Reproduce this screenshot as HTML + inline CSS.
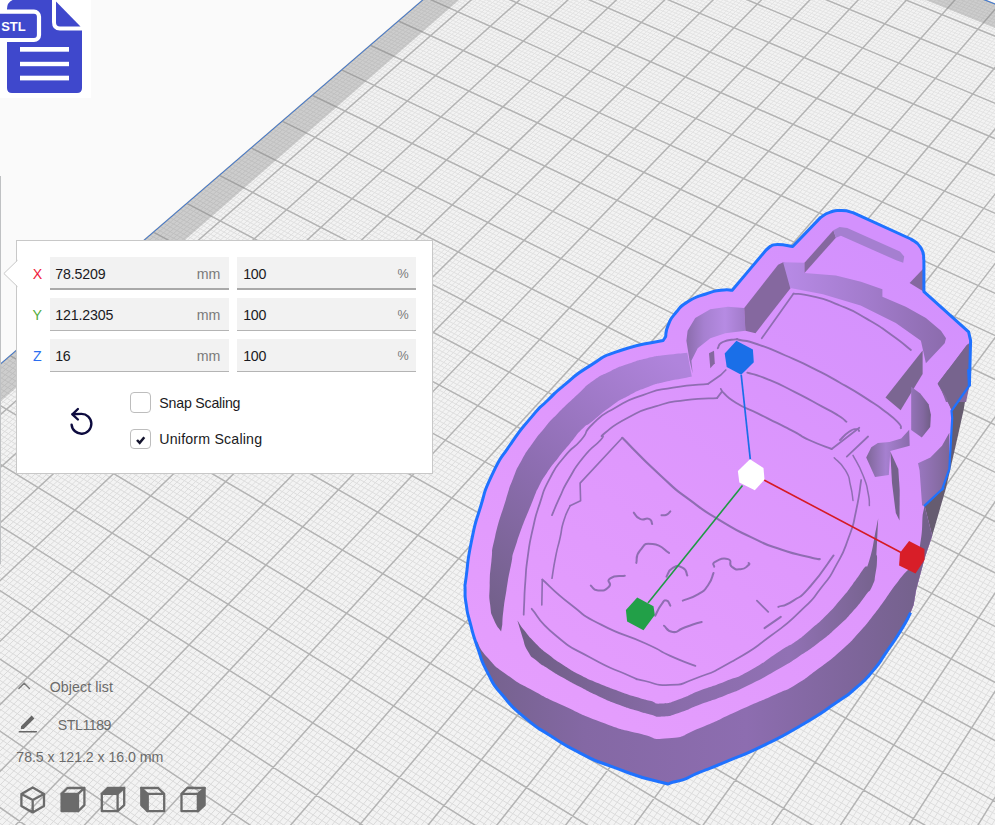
<!DOCTYPE html>
<html><head><meta charset="utf-8"><title>Scale tool</title>
<style>
html,body{margin:0;padding:0;}
body{width:995px;height:825px;overflow:hidden;background:#fafafa;position:relative;font-family:"Liberation Sans",sans-serif;color:#1a1a22;font-size:14.2px;}
.scene{position:absolute;left:0;top:0;display:block;}
.abs{position:absolute;white-space:nowrap;line-height:16px;}
.stlbox{position:absolute;left:0;top:0;width:91px;height:97.5px;background:#fff;}
.leftbar{position:absolute;left:0;top:176px;width:1.2px;height:388px;background:#bfc1c3;}
.panel{position:absolute;left:16px;top:240px;width:415px;height:232px;background:#fff;border:1px solid #c8c8c8;}
.field{position:absolute;height:31px;background:#f2f2f2;border-bottom:1px solid #b4b4b4;}
.field.hot{border-bottom:2px solid #a9a9a9;height:31px;}
.unit{color:#7a7a7a;}
.gray{color:#6b6b6b;}
.cb{position:absolute;left:130.3px;width:18.7px;height:18.8px;border:1px solid #bdbdbd;border-radius:4px;background:#fff;}
</style></head><body>
<svg class="scene" width="995" height="825" viewBox="0 0 995 825">
<path d="M1005 835 L-10 835 L-10 373 L434.3 -10 L959.7 -10 L1005 8Z" fill="#f3f3f3"/>
<defs><linearGradient id="gminor" gradientUnits="userSpaceOnUse" x1="700" y1="0" x2="300" y2="825"><stop offset="0" stop-color="#e3e3e3"/><stop offset="1" stop-color="#dadada"/></linearGradient></defs>
<path d="M-5 373.7L433.4 -5M-5 378.6L438.2 -5M-5 383.7L443 -5M-5 388.7L447.8 -5M-5 393.7L452.7 -5M-5 398.8L457.5 -5M-5 403.9L462.3 -5M-5 409L467.1 -5M-5 414.2L472 -5M-5 424.5L481.6 -5M-5 429.7L486.4 -5M-5 435L491.3 -5M-5 440.2L496.1 -5M-5 445.5L500.9 -5M-5 450.8L505.8 -5M-5 456.1L510.6 -5M-5 461.5L515.4 -5M-5 466.8L520.2 -5M-5 477.6L529.9 -5M-5 483.1L534.7 -5M-5 488.6L539.5 -5M-5 494L544.4 -5M-5 499.6L549.2 -5M-5 505.1L554 -5M-5 510.7L558.8 -5M-5 516.3L563.7 -5M-5 521.9L568.5 -5M-5 533.2L578.1 -5M-5 538.9L583 -5M-5 544.6L587.8 -5M-5 550.3L592.6 -5M-5 556.1L597.4 -5M-5 561.9L602.3 -5M-5 567.7L607.1 -5M-5 573.6L611.9 -5M-5 579.5L616.7 -5M-5 591.3L626.4 -5M-5 597.3L631.2 -5M-5 603.3L636.1 -5M-5 609.3L640.9 -5M-5 615.3L645.7 -5M-5 621.4L650.5 -5M-5 627.5L655.4 -5M-5 633.7L660.2 -5M-5 639.8L665 -5M-5 652.2L674.7 -5M-5 658.5L679.5 -5M-5 664.8L684.3 -5M-5 671.1L689.1 -5M-5 677.4L694 -5M-5 683.8L698.8 -5M-5 690.2L703.6 -5M-5 696.6L708.4 -5M-5 703.1L713.3 -5M-5 716.1L722.9 -5M-5 722.7L727.7 -5M-5 729.3L732.6 -5M-5 735.9L737.4 -5M-5 742.6L742.2 -5M-5 749.3L747 -5M-5 756L751.9 -5M-5 762.7L756.7 -5M-5 769.5L761.5 -5M-5 783.2L771.2 -5M-5 790.1L776 -5M-5 797.1L780.8 -5M-5 804L785.6 -5M-5 811L790.5 -5M-5 818.1L795.3 -5M-5 825.1L800.1 -5M-2.8 830L804.9 -5M4 830L809.8 -5M17.8 830L819.4 -5M24.7 830L824.2 -5M31.6 830L829.1 -5M38.5 830L833.9 -5M45.4 830L838.7 -5M52.3 830L843.5 -5M59.1 830L848.4 -5M66 830L853.2 -5M72.9 830L858 -5M86.7 830L867.7 -5M93.6 830L872.5 -5M100.5 830L877.3 -5M107.4 830L882.1 -5M114.2 830L887 -5M121.1 830L891.8 -5M128 830L896.6 -5M134.9 830L901.4 -5M141.8 830L906.2 -5M155.6 830L915.9 -5M162.5 830L920.7 -5M169.3 830L925.5 -5M176.2 830L930.4 -5M183.1 830L935.2 -5M190 830L940 -5M196.9 830L944.8 -5M203.8 830L949.7 -5M210.7 830L954.5 -5M224.4 830L964.1 -5M231.3 830L969 -5M238.2 830L973.4 -4.6M245.1 830L977 -3.1M252 830L980.6 -1.7M258.9 830L984.1 -0.3M265.8 830L987.7 1.1M272.6 830L991.3 2.6M279.5 830L994.9 4M293.3 830L1000 9.4M300.2 830L1000 15M307.1 830L1000 20.7M314 830L1000 26.4M320.9 830L1000 32.2M327.7 830L1000 38M334.6 830L1000 43.8M341.5 830L1000 49.7M348.4 830L1000 55.6M362.2 830L1000 67.5M369.1 830L1000 73.5M375.9 830L1000 79.5M382.8 830L1000 85.6M389.7 830L1000 91.7M396.6 830L1000 97.8M403.5 830L1000 104M410.4 830L1000 110.2M417.3 830L1000 116.5M431 830L1000 129.1M437.9 830L1000 135.5M444.8 830L1000 141.9M451.7 830L1000 148.3M458.6 830L1000 154.8M465.5 830L1000 161.3M472.3 830L1000 167.9M479.2 830L1000 174.5M486.1 830L1000 181.2M499.9 830L1000 194.6M506.8 830L1000 201.4M513.7 830L1000 208.2M520.5 830L1000 215M527.4 830L1000 221.9M534.3 830L1000 228.9M541.2 830L1000 235.9M548.1 830L1000 242.9M555 830L1000 250M568.7 830L1000 264.3M575.6 830L1000 271.5M582.5 830L1000 278.8M589.4 830L1000 286.1M596.3 830L1000 293.5M603.2 830L1000 300.9M610 830L1000 308.4M616.9 830L1000 315.9M623.8 830L1000 323.4M637.6 830L1000 338.7M644.5 830L1000 346.4M651.4 830L1000 354.2M658.2 830L1000 362M665.1 830L1000 369.9M672 830L1000 377.8M678.9 830L1000 385.8M685.8 830L1000 393.8M692.7 830L1000 401.9M706.4 830L1000 418.2M713.3 830L1000 426.5M720.2 830L1000 434.8M727.1 830L1000 443.2M734 830L1000 451.6M740.9 830L1000 460.1M747.7 830L1000 468.7M754.6 830L1000 477.3M761.5 830L1000 486M775.3 830L1000 503.5M782.2 830L1000 512.4M789 830L1000 521.3M795.9 830L1000 530.3M802.8 830L1000 539.3M809.7 830L1000 548.5M816.6 830L1000 557.6M823.5 830L1000 566.9M830.4 830L1000 576.2M844.1 830L1000 595.1M851 830L1000 604.6M857.9 830L1000 614.2M864.8 830L1000 623.9M871.7 830L1000 633.7M878.5 830L1000 643.5M885.4 830L1000 653.4M892.3 830L1000 663.4M899.2 830L1000 673.4M913 830L1000 693.8M919.8 830L1000 704M926.7 830L1000 714.4M933.6 830L1000 724.9M940.5 830L1000 735.4M947.4 830L1000 746M954.3 830L1000 756.7M961.1 830L1000 767.5M968 830L1000 778.4M981.8 830L1000 800.3M988.7 830L1000 811.5M995.6 830L1000 822.7M-5 827.6L-1.7 830M-5 819.7L9.6 830M-5 811.8L20.9 830M-5 796.2L43.4 830M-5 788.4L54.7 830M-5 780.7L65.9 830M-5 773L77.2 830M-5 765.4L88.5 830M-5 757.8L99.7 830M-5 750.2L111 830M-5 742.7L122.3 830M-5 735.3L133.6 830M-5 720.5L156.1 830M-5 713.1L167.4 830M-5 705.8L178.6 830M-5 698.6L189.9 830M-5 691.3L201.2 830M-5 684.2L212.4 830M-5 677L223.7 830M-5 669.9L235 830M-5 662.8L246.2 830M-5 648.8L268.8 830M-5 641.9L280 830M-5 634.9L291.3 830M-5 628.1L302.6 830M-5 621.2L313.8 830M-5 614.4L325.1 830M-5 607.6L336.4 830M-5 600.9L347.6 830M-5 594.2L358.9 830M-5 580.9L381.4 830M-5 574.3L392.7 830M-5 567.7L404 830M-5 561.2L415.2 830M-5 554.7L426.5 830M-5 548.2L437.8 830M-5 541.8L449 830M-5 535.4L460.3 830M-5 529.1L471.6 830M-5 516.4L494.1 830M-5 510.2L505.3 830M-5 503.9L516.6 830M-5 497.7L527.9 830M-5 491.5L539.1 830M-5 485.4L550.4 830M-5 479.3L561.7 830M-5 473.2L572.9 830M-5 467.2L584.2 830M-5 455.1L606.7 830M-5 449.2L618 830M-5 443.3L629.3 830M-5 437.3L640.5 830M-5 431.5L651.8 830M-5 425.6L663 830M-5 419.8L674.3 830M-5 414L685.6 830M-5 408.3L696.8 830M-5 396.8L719.4 830M-5 391.1L730.6 830M-5 385.5L741.9 830M-5 379.9L753.2 830M-5 374.3L764.4 830M-5 368.7L775.7 830M-1.2 365.4L786.9 830M2.6 362.1L798.2 830M6.4 358.8L809.5 830M14 352.3L832 830M17.7 349.1L843.3 830M21.5 345.8L854.5 830M25.2 342.6L865.8 830M29 339.4L877 830M32.7 336.2L888.3 830M36.4 333L899.6 830M40.1 329.8L910.8 830M43.8 326.6L922.1 830M51.2 320.3L944.6 830M54.8 317.1L955.9 830M58.5 314L967.1 830M62.1 310.8L978.4 830M65.7 307.7L989.7 830M69.4 304.6L1000 829.5M73 301.5L1000 823.1M76.6 298.4L1000 816.8M80.2 295.3L1000 810.6M87.3 289.1L1000 798.1M90.9 286L1000 791.9M94.4 283L1000 785.7M98 279.9L1000 779.6M101.5 276.9L1000 773.5M105 273.8L1000 767.4M108.6 270.8L1000 761.3M112.1 267.8L1000 755.3M115.6 264.8L1000 749.3M122.5 258.8L1000 737.4M126 255.8L1000 731.4M129.4 252.8L1000 725.5M132.9 249.8L1000 719.7M136.3 246.9L1000 713.8M139.8 243.9L1000 708M143.2 241L1000 702.2M146.6 238L1000 696.4M150 235.1L1000 690.7M156.8 229.2L1000 679.3M160.1 226.3L1000 673.6M163.5 223.4L1000 667.9M166.9 220.5L1000 662.3M170.2 217.7L1000 656.7M173.6 214.8L1000 651.1M176.9 211.9L1000 645.6M180.2 209L1000 640.1M183.5 206.2L1000 634.6M190.1 200.5L1000 623.6M193.4 197.7L1000 618.2M196.7 194.8L1000 612.8M200 192L1000 607.4M203.2 189.2L1000 602M206.5 186.4L1000 596.7M209.7 183.6L1000 591.3M213 180.8L1000 586M216.2 178L1000 580.8M222.6 172.5L1000 570.3M225.8 169.7L1000 565.1M229 167L1000 559.9M232.2 164.2L1000 554.7M235.4 161.5L1000 549.5M238.5 158.8L1000 544.4M241.7 156L1000 539.3M244.9 153.3L1000 534.2M248 150.6L1000 529.2M254.3 145.2L1000 519.1M257.4 142.5L1000 514.1M260.5 139.8L1000 509.1M263.6 137.2L1000 504.1M266.7 134.5L1000 499.2M269.8 131.8L1000 494.3M272.9 129.2L1000 489.3M275.9 126.5L1000 484.5M279 123.9L1000 479.6M285.1 118.6L1000 469.9M288.2 116L1000 465.1M291.2 113.4L1000 460.3M294.2 110.8L1000 455.6M297.2 108.2L1000 450.8M300.3 105.6L1000 446.1M303.3 103L1000 441.3M306.3 100.4L1000 436.7M309.3 97.8L1000 432M315.2 92.7L1000 422.7M318.2 90.1L1000 418M321.1 87.6L1000 413.4M324.1 85L1000 408.9M327 82.5L1000 404.3M330 80L1000 399.7M332.9 77.4L1000 395.2M335.8 74.9L1000 390.7M338.7 72.4L1000 386.2M344.5 67.4L1000 377.2M347.4 64.9L1000 372.8M350.3 62.4L1000 368.3M353.2 59.9L1000 363.9M356.1 57.4L1000 359.5M359 55L1000 355.1M361.8 52.5L1000 350.8M364.7 50.1L1000 346.4M367.5 47.6L1000 342.1M373.2 42.7L1000 333.5M376 40.3L1000 329.2M378.8 37.8L1000 324.9M381.6 35.4L1000 320.7M384.4 33L1000 316.4M387.2 30.6L1000 312.2M390 28.2L1000 308M392.8 25.8L1000 303.8M395.6 23.4L1000 299.7M401.1 18.6L1000 291.3M403.9 16.3L1000 287.2M406.6 13.9L1000 283.1M409.4 11.5L1000 279M412.1 9.2L1000 274.9M414.8 6.8L1000 270.9M417.6 4.5L1000 266.8M420.3 2.1L1000 262.8M423 -0.2L1000 258.7M428.4 -4.9L1000 250.7M436 -5L1000 246.8M443.9 -5L1000 242.8M451.8 -5L1000 238.8M459.7 -5L1000 234.9M467.6 -5L1000 231M475.4 -5L1000 227.1M483.3 -5L1000 223.2M491.2 -5L1000 219.3M507 -5L1000 211.6M514.9 -5L1000 207.7M522.8 -5L1000 203.9M530.7 -5L1000 200.1M538.6 -5L1000 196.3M546.4 -5L1000 192.5M554.3 -5L1000 188.7M562.2 -5L1000 185M570.1 -5L1000 181.2M585.9 -5L1000 173.7M593.8 -5L1000 170M601.7 -5L1000 166.3M609.5 -5L1000 162.7M617.4 -5L1000 159M625.3 -5L1000 155.3M633.2 -5L1000 151.7M641.1 -5L1000 148.1M649 -5L1000 144.4M664.8 -5L1000 137.2M672.6 -5L1000 133.6M680.5 -5L1000 130.1M688.4 -5L1000 126.5M696.3 -5L1000 123M704.2 -5L1000 119.4M712.1 -5L1000 115.9M720 -5L1000 112.4M727.8 -5L1000 108.9M743.6 -5L1000 101.9M751.5 -5L1000 98.5M759.4 -5L1000 95M767.3 -5L1000 91.6M775.2 -5L1000 88.2M783.1 -5L1000 84.7M790.9 -5L1000 81.3M798.8 -5L1000 77.9M806.7 -5L1000 74.6M822.5 -5L1000 67.8M830.4 -5L1000 64.5M838.3 -5L1000 61.1M846.1 -5L1000 57.8M854 -5L1000 54.5M861.9 -5L1000 51.2M869.8 -5L1000 47.9M877.7 -5L1000 44.6M885.6 -5L1000 41.3M901.3 -5L1000 34.8M909.2 -5L1000 31.6M917.1 -5L1000 28.3M925 -5L1000 25.1M932.9 -5L1000 21.9M940.8 -5L1000 18.7M948.6 -5L1000 15.5M956.5 -5L1000 12.3M964.4 -5L1000 9.2" stroke="url(#gminor)" stroke-width="1" fill="none"/>
<path d="M-5 368.7L428.5 -5M-5 419.3L476.8 -5M-5 472.2L525.1 -5M-5 527.5L573.3 -5M-5 585.4L621.6 -5M-5 646L669.8 -5M-5 709.6L718.1 -5M-5 776.4L766.3 -5M10.9 830L814.6 -5M79.8 830L862.8 -5M148.7 830L911.1 -5M217.6 830L959.3 -5M286.4 830L998.5 5.4M355.3 830L1000 61.5M424.1 830L1000 122.8M493 830L1000 187.8M561.9 830L1000 257.1M630.7 830L1000 331M699.6 830L1000 410M768.4 830L1000 494.7M837.2 830L1000 585.6M906.1 830L1000 683.5M974.9 830L1000 789.3M-5 804L32.1 830M-5 727.8L144.8 830M-5 655.8L257.5 830M-5 587.5L370.2 830M-5 522.7L482.8 830M-5 461.1L595.5 830M-5 402.5L708.1 830M10.2 355.6L820.7 830M47.5 323.4L933.4 830M83.8 292.2L1000 804.3M119 261.8L1000 743.3M153.4 232.2L1000 685M186.8 203.3L1000 629.1M219.4 175.3L1000 575.5M251.1 147.9L1000 524.1M282.1 121.2L1000 474.7M312.2 95.2L1000 427.3M341.6 69.9L1000 381.7M370.3 45.2L1000 337.8M398.4 21L1000 295.5M425.7 -2.6L1000 254.7M499.1 -5L1000 215.4M578 -5L1000 177.5M656.9 -5L1000 140.8M735.7 -5L1000 105.4M814.6 -5L1000 71.2M893.5 -5L1000 38.1M972.3 -5L1000 6" stroke="#b3b3b3" stroke-width="1.5" fill="none"/>
<path d="M-10 373 L434.3 -10 L470.4 -10 L-10 410.8Z" fill="#808080" fill-opacity="0.33"/>
<path d="M959.7 -10 L1005 8 L1005 32 L900.7 -10Z" fill="#808080" fill-opacity="0.33"/>
<path d="M-5 368.7L428.5 -5M972.3 -5L1000 6" stroke="#3a78d8" stroke-width="1" fill="none"/>
<defs>
<linearGradient id="gwall" gradientUnits="userSpaceOnUse" x1="470" y1="0" x2="930" y2="0">
<stop offset="0" stop-color="#73618a"/><stop offset="0.25" stop-color="#8468a4"/><stop offset="0.6" stop-color="#8d6db0"/><stop offset="0.85" stop-color="#7d6599"/><stop offset="1" stop-color="#73618a"/></linearGradient>
<linearGradient id="gcres" gradientUnits="userSpaceOnUse" x1="500" y1="640" x2="700" y2="380">
<stop offset="0" stop-color="#6f5e85"/><stop offset="0.5" stop-color="#8e6eb2"/><stop offset="1" stop-color="#b084dc"/></linearGradient>
<linearGradient id="gneck" gradientUnits="userSpaceOnUse" x1="790" y1="0" x2="950" y2="0">
<stop offset="0" stop-color="#b689e4"/><stop offset="0.5" stop-color="#a27bcb"/><stop offset="1" stop-color="#8a6bab"/></linearGradient>
<linearGradient id="gisl" gradientUnits="userSpaceOnUse" x1="520" y1="0" x2="880" y2="0">
<stop offset="0" stop-color="#6f5e85"/><stop offset="0.45" stop-color="#8a6cab"/><stop offset="0.75" stop-color="#9171b4"/><stop offset="1" stop-color="#75628c"/></linearGradient>
<linearGradient id="glight" gradientUnits="userSpaceOnUse" x1="860" y1="240" x2="540" y2="720">
<stop offset="0" stop-color="#d391fd"/><stop offset="0.55" stop-color="#df98fd"/><stop offset="1" stop-color="#e59efd"/></linearGradient>
<linearGradient id="gshr" gradientUnits="userSpaceOnUse" x1="911" y1="0" x2="931" y2="0">
<stop offset="0" stop-color="#9473b8"/><stop offset="0.6" stop-color="#8368a0"/><stop offset="1" stop-color="#6f5e85"/></linearGradient>
<linearGradient id="gshl" gradientUnits="userSpaceOnUse" x1="866" y1="0" x2="910" y2="0">
<stop offset="0" stop-color="#7d6696"/><stop offset="0.45" stop-color="#a680d0"/><stop offset="1" stop-color="#8a6cab"/></linearGradient>
<linearGradient id="gring" gradientUnits="userSpaceOnUse" x1="918" y1="0" x2="950" y2="0">
<stop offset="0" stop-color="#9a77c0"/><stop offset="1" stop-color="#7d6696"/></linearGradient>
<linearGradient id="gring2" gradientUnits="userSpaceOnUse" x1="686" y1="0" x2="746" y2="0">
<stop offset="0" stop-color="#8a6cab"/><stop offset="0.3" stop-color="#a680d0"/><stop offset="0.65" stop-color="#b68be3"/><stop offset="1" stop-color="#a07ac8"/></linearGradient>
</defs>
<path d="M910.6 612.6C907.4 618.5 909.2 616.8 901 630.2C892.8 643.6 895.1 639.4 885.9 652.8C876.7 666.2 883.4 658.7 873.4 670.4C863.3 682.1 868.3 677.1 855.8 688C843.2 698.9 854.1 690.5 835.7 703.1C817.3 715.6 824.8 711.4 800.5 725.7C776.2 739.9 787.9 733.6 762.8 745.8C737.7 757.9 746.1 753.3 725.1 762.1C704.2 770.9 716.3 765.7 700 772.2C683.7 778.6 690.8 778.5 676.1 781.5C661.5 784.4 677 785.7 656 781C635.1 776.2 638.4 776.3 613.3 767.1C588.2 757.9 601.6 763.8 580.7 753.3C559.7 742.8 568.9 747.5 550.5 735.7C532.1 724 541.3 731.5 525.4 718.1C509.5 704.7 515.3 710.6 502.8 695.5C490.2 680.5 496.1 688.8 487.7 672.9C479.3 657 483.5 664.5 477.6 647.8C471.8 631 473.9 636.9 470.1 622.7C466.3 608.4 468 616 466.3 605.1C464.7 594.2 465.1 599.7 465.1 590C465.1 580.3 464.2 592.2 466.3 575.9C468.4 559.6 466.8 564 471.5 541C476.2 518 473.7 528.9 480.5 507C487.3 485.1 482 496.1 491.8 475.4C501.6 454.7 496.9 464.3 510 445C523.1 425.7 518.3 432.6 531 417.6C543.7 402.6 536.6 411.1 548 400C559.4 388.9 551 395.9 565.1 384.4C579.2 372.9 571.8 376.9 590.2 365.6C608.7 354.3 596.1 358.9 620.4 350.5C644.7 342.1 648.9 343.8 663.1 340.5L665.6 336.7C666.4 332.9 664.8 333.3 668.1 325.4C671.5 317.4 669 320.8 675.7 312.8C682.4 304.9 678.2 307.8 688.2 301.5C698.3 295.2 694.9 297.7 705.8 294C716.7 290.2 712.1 291.5 720.9 290.2C729.7 288.9 728.4 290.2 732.2 290.2L732.2 290.2L746 273.9L766.1 250L770.1 246.5L770.1 246.5C772.6 245.8 770.1 244.5 777.7 244.5C785.2 244.5 787.7 245.8 792.7 246.5L792.7 246.5L820.4 217.6L820.4 217.6C823.7 215.8 823.3 214.4 830.4 212.1C837.5 209.7 834.2 210.4 841.7 210.6C849.3 210.7 849.3 211.9 853 212.6L853 212.6L910.8 239L910.8 239C914.2 241.9 916.5 240.6 920.9 247.8C925.2 254.9 922.9 256.1 923.9 260.3L923.9 260.3L923.9 291.7L968.6 331.9L968.6 331.9L970.6 340.7L970.6 340.7L969.4 386L966.1 395L963.6 410.1L958.6 432.7L946 488L932.2 535.7L924.6 558.3L916.1 590L913.6 605.1L910.6 612.6Z" fill="#665c70"/>
<path d="M910.6 612.6C907.4 618.5 909.2 616.8 901 630.2C892.8 643.6 895.1 639.4 885.9 652.8C876.7 666.2 883.4 658.7 873.4 670.4C863.3 682.1 868.3 677.1 855.8 688C843.2 698.9 854.1 690.5 835.7 703.1C817.3 715.6 824.8 711.4 800.5 725.7C776.2 739.9 787.9 733.6 762.8 745.8C737.7 757.9 746.1 753.3 725.1 762.1C704.2 770.9 716.3 765.7 700 772.2C683.7 778.6 690.8 778.5 676.1 781.5C661.5 784.4 677 785.7 656 781C635.1 776.2 638.4 776.3 613.3 767.1C588.2 757.9 601.6 763.8 580.7 753.3C559.7 742.8 568.9 747.5 550.5 735.7C532.1 724 541.3 731.5 525.4 718.1C509.5 704.7 515.3 710.6 502.8 695.5C490.2 680.5 496.1 688.8 487.7 672.9C479.3 657 483.5 664.5 477.6 647.8C471.8 631 473.9 636.9 470.1 622.7C466.3 608.4 468 616 466.3 605.1C464.7 594.2 465.1 599.7 465.1 590C465.1 580.3 464.2 592.2 466.3 575.9C468.4 559.6 466.8 564 471.5 541C476.2 518 473.7 528.9 480.5 507C487.3 485.1 482 496.1 491.8 475.4C501.6 454.7 496.9 464.3 510 445C523.1 425.7 518.3 432.6 531 417.6C543.7 402.6 536.6 411.1 548 400C559.4 388.9 551 395.9 565.1 384.4C579.2 372.9 571.8 376.9 590.2 365.6C608.7 354.3 596.1 358.9 620.4 350.5C644.7 342.1 648.9 343.8 663.1 340.5L665.6 336.7C666.4 332.9 664.8 333.3 668.1 325.4C671.5 317.4 669 320.8 675.7 312.8C682.4 304.9 678.2 307.8 688.2 301.5C698.3 295.2 694.9 297.7 705.8 294C716.7 290.2 712.1 291.5 720.9 290.2C729.7 288.9 728.4 290.2 732.2 290.2L732.2 290.2L746 273.9L766.1 250L770.1 246.5L770.1 246.5C772.6 245.8 770.1 244.5 777.7 244.5C785.2 244.5 787.7 245.8 792.7 246.5L792.7 246.5L820.4 217.6L820.4 217.6C823.7 215.8 823.3 214.4 830.4 212.1C837.5 209.7 834.2 210.4 841.7 210.6C849.3 210.7 849.3 211.9 853 212.6L853 212.6L910.8 239L910.8 239C914.2 241.9 916.5 240.6 920.9 247.8C925.2 254.9 922.9 256.1 923.9 260.3L923.9 260.3L923.9 291.7L968.6 331.9L968.6 331.9L970.6 340.7L970.6 340.7L969.4 386L968.2 370L969 386L951.5 410.8L952.2 418.1L949.3 469.1L942 489.9L943.5 488L924.6 505.6L932.2 535.7L924.6 558.3L916.1 590L913.6 605.1L910.6 612.6Z" fill="url(#glight)"/>
<path d="M476.4 640.3C480.2 646.1 477.2 646.1 487.7 657.8C498.2 669.6 492.7 664.5 507.8 675.4C522.9 686.3 514.5 680.5 532.9 690.5C551.3 700.6 540.5 695.1 563.1 705.6C585.7 716 575.6 712.7 600.8 721.9C625.9 731.1 615.8 727.8 638.4 733.2C661.1 738.7 648.1 740 668.6 738.2C689.1 736.5 677 737.1 700 728C723 718.9 712.6 722.2 737.7 711C762.8 699.8 756.2 703.2 775.4 694.5C794.6 685.8 781 693.5 795.2 685C809.3 676.5 802.7 680.5 817.9 669.1C833 657.7 827 663 840.6 650.9C854.2 638.8 847.7 644.8 858.8 632.7C869.9 620.6 864.8 626.2 873.9 614.5C883 602.9 878 609 886.1 597.9C894.1 586.8 890.6 590.8 898.2 581.2C905.8 571.6 903.7 574.6 908.8 569.1C913.8 563.5 909.6 572.4 913.3 564.5C917.1 556.7 916.9 562.1 920 545.5C923.1 528.8 921.8 524.8 922.7 514.5L924.6 505.6L932.2 535.7L924.6 558.3L916.1 590L913.6 605.1L910.6 612.6L910.6 612.6C907.4 618.5 909.2 616.8 901 630.2C892.8 643.6 895.1 639.4 885.9 652.8C876.7 666.2 883.4 658.7 873.4 670.4C863.3 682.1 868.3 677.1 855.8 688C843.2 698.9 854.1 690.5 835.7 703.1C817.3 715.6 824.8 711.4 800.5 725.7C776.2 739.9 787.9 733.6 762.8 745.8C737.7 757.9 746.1 753.3 725.1 762.1C704.2 770.9 716.3 765.7 700 772.2C683.7 778.6 690.8 778.5 676.1 781.5C661.5 784.4 677 785.7 656 781C635.1 776.2 638.4 776.3 613.3 767.1C588.2 757.9 601.6 763.8 580.7 753.3C559.7 742.8 568.9 747.5 550.5 735.7C532.1 724 541.3 731.5 525.4 718.1C509.5 704.7 515.3 710.6 502.8 695.5C490.2 680.5 496.1 688.8 487.7 672.9C479.3 657 481 656.2 477.6 647.8Z" fill="url(#gwall)"/>
<path d="M687.3 352.7C680 353.5 678.8 353.3 665.5 355.1C652.1 356.9 659.4 355.3 647.3 358.2C635.2 361 641.2 359.4 629.1 363.6C617 367.9 623 365.2 610.9 370.9C598.8 376.7 603.9 373 592.7 380.9C581.6 388.8 589.1 383.7 577.5 394.5C565.9 405.3 568.9 402.2 557.9 413.3C546.9 424.4 553 417.8 544.5 427.9C536 438 540.1 432.7 532.4 443.6C524.7 454.5 528 448.9 521.5 460.6C515 472.3 518.2 465.7 513 478.8C507.8 491.9 511.8 480.6 505.8 500C499.8 519.4 499.8 516.6 495 537C490.2 557.5 493.2 545.1 491.4 561.3C489.6 577.5 490.1 571 489.7 585.6C489.3 600.1 488.8 593.6 490.2 605C491.5 616.3 490.2 610.6 493.8 619.5C497.5 628.4 498.7 627.6 501.1 631.6L502.3 624.4C502.7 619.5 502.1 621.1 503.5 609.8C504.9 598.5 504 605 506.4 590.4C508.9 575.8 507.3 582.3 510.8 566.1C514.3 550 509.5 563.9 516.9 541.9C524.3 519.8 525.8 518.2 533 500C540.2 481.8 533.8 496.4 538.5 487.3C543.2 478.2 540.5 482.4 547 472.7C553.5 463 550.2 467.9 557.9 458.2C565.6 448.5 561.9 453.3 570 443.6C578.1 433.9 574.5 436.7 582.1 429.1C589.7 421.5 583.1 428.5 592.7 420.9C602.3 413.3 598.8 414.8 610.9 406.4C623 397.9 617 401.8 629.1 395.5C641.2 389.1 635.2 391.8 647.3 387.3C659.4 382.7 653.3 384.8 665.5 381.8C677.6 378.8 674.8 380 683.6 378.2C692.4 376.4 689.1 377 691.8 376.4Z" fill="url(#gcres)"/>
<path d="M686.4 340.7 L687.6 330.7 L695.2 318.1 L710.3 309.3 L727.8 306.8 L744.2 308 L745.4 330.7 L725.3 333.2 L710.3 338.2 L697.7 348.2 L691.4 360.8 L692.7 373.4 L689.6 360.8Z" fill="url(#gring2)"/>
<path d="M709 353.3 L714 350.8 L714.8 363.3 L710.3 368.3Z" fill="#85689f"/>
<path d="M744.2 308 L778.1 264.8 L783.1 262.3 L790.7 265.3 L790.7 287.9 L755.5 333.2 L745.4 330.7Z" fill="#85689f"/>
<path d="M783.1 262.3 L804.5 262.8 L804.5 272.9 L835.9 275.4 L861 281.7 L882.4 289.2 L882.4 296.7 L905.8 306.8 L925.9 318.1 L941 330.7 L946 338.2 L944.7 343.2 L925.9 363.3 L920.9 340.7 L895.8 323.1 L860.6 305.6 L822.9 294.2 L790.2 288Z" fill="url(#gneck)"/>
<path d="M804.5 262.8 L833.4 230.2 L835.9 237.7 L804.5 272.9Z" fill="#85689f"/>
<path d="M833.4 230.2 L839.6 227.1 L847.2 228.1 L899.9 251.5 L904.2 256.5 L903.2 262.8 L896.2 260.3 L840.9 235.7 L835.9 237.7Z" fill="#a57fd0"/>
<path d="M909.6 282.9 L923.9 267.9 L923.9 291.7Z" fill="#85689f"/>
<path d="M937.6 383.8 L947.8 370 L968.2 370 L969 386 L951.5 409.3Z" fill="#85689f"/>
<path d="M938.5 382.2 L968.6 343.2 L969.4 386 L966.1 402 L946 402Z" fill="#85689f"/>
<path d="M517.4 620.5C519.7 623.7 518.4 623 524.2 630.3C530.1 637.6 526.8 634.3 534.8 642.4C542.9 650.5 538.9 647 548.5 654.5C558.1 662.1 553 658.3 563.6 665.2C574.2 672 568.7 668.9 580.3 675C591.9 681.1 585.9 678 598.5 683.3C611.1 688.6 605.6 686.4 618.2 690.9C630.8 695.5 625.8 693.7 636.4 697C647 700.3 641.5 698.6 650 700.8C658.5 702.9 652 704.1 662 703.5C672 702.9 667.3 703.3 680 699C692.7 694.7 685 696.4 700 690.6C715 684.8 708.3 688.2 725 681.5C741.7 674.8 731.7 680.8 750 670.6C768.3 660.4 764.9 660.5 780 650.9C795.1 641.3 785.1 648.9 795.2 641.8C805.3 634.7 800.2 638.3 810.3 629.7C820.4 621.1 815.4 626.2 825.5 616.1C835.6 606 831.5 610 840.6 599.4C849.7 588.8 845.2 594.3 852.7 584.2C860.3 574.1 857.8 577.2 863.3 569.1C868.9 561 865.1 573.9 869.4 560C873.7 546.1 873.4 541.2 876.4 527.3C879.3 513.3 877.6 521.2 878.2 518.2L876.4 554.5C876.6 556.4 877.3 553.6 877 560C876.7 566.4 877 565.1 875.5 573.6C873.9 582.2 876 578.2 872.4 585.8C868.9 593.3 871.4 587.8 864.8 596.4C858.3 604.9 861.8 601.4 852.7 611.5C843.6 621.6 849.2 616.1 837.6 626.7C826 637.3 831 633.2 817.9 643.3C804.7 653.4 810.8 648.6 798.2 657C785.6 665.3 796.1 659.2 780 668.3C763.9 677.5 768.3 675.4 750 684.5C731.7 693.6 741.7 688.8 725 695.5C708.3 702.2 715 698.8 700 704.5C685 710.2 692.3 708.5 680 712.5C667.7 716.5 673 715.9 663 716.5C653 717.1 658.9 716.4 650 714.4C641.1 712.4 647 713.9 636.4 710.6C625.8 707.3 630.8 709.3 618.2 704.5C605.6 699.7 611.1 702 598.5 696.2C585.9 690.4 591.9 693.2 580.3 687.1C568.7 681.1 574.2 684.1 563.6 678C553 672 557.6 674.7 548.5 668.9C539.4 663.1 543.2 666.4 536.4 660.6C529.5 654.8 532.6 659.1 528 651.5C523.5 643.9 524.5 642.4 522.7 637.9Z" fill="url(#gisl)"/>
<path d="M922.6 350.5 L922.6 373.9 L900.6 410.3 L885.5 397.4Z" fill="#7b6692"/>
<path d="M911.2 386.8 L920.3 393.6 L928.6 404.2 L930.9 414.8 L930.2 427 L921.8 437.6 L911.2 430Z" fill="url(#gshr)"/>
<path d="M937.7 383.8 L966.5 345.2 L969.1 343.6 L968.8 387.6 L951.4 410.3 L946.1 396.7Z" fill="#77648e"/>
<path d="M866.2 457.4 L871.3 447.2 L877.9 442.9 L889.5 442.1 L901.2 438.5 L909.2 429.7 L909.7 445.8 L890.3 450.9 L888.8 474.9 L875 477.1Z" fill="url(#gshl)"/>
<path d="M890.3 451.6 L898.3 469.1 L899.7 489.9 L899.5 520.6 L895.8 513.1 L892 482.9Z" fill="#75628c"/>
<path d="M918 463.3 L930.4 457.4 L942 445.8 L949.3 432.7 L949.3 469.1 L942 489.9 L924.6 505.6 L922.1 505.6 L919.6 470.4Z" fill="url(#gring)"/>
<path d="M910.6 612.6C907.4 618.5 909.2 616.8 901 630.2C892.8 643.6 895.1 639.4 885.9 652.8C876.7 666.2 883.4 658.7 873.4 670.4C863.3 682.1 868.3 677.1 855.8 688C843.2 698.9 854.1 690.5 835.7 703.1C817.3 715.6 824.8 711.4 800.5 725.7C776.2 739.9 787.9 733.6 762.8 745.8C737.7 757.9 746.1 753.3 725.1 762.1C704.2 770.9 716.3 765.7 700 772.2C683.7 778.6 690.8 778.5 676.1 781.5C661.5 784.4 677 785.7 656 781C635.1 776.2 638.4 776.3 613.3 767.1C588.2 757.9 601.6 763.8 580.7 753.3C559.7 742.8 568.9 747.5 550.5 735.7C532.1 724 541.3 731.5 525.4 718.1C509.5 704.7 515.3 710.6 502.8 695.5C490.2 680.5 496.1 688.8 487.7 672.9C479.3 657 483.5 664.5 477.6 647.8C471.8 631 473.9 636.9 470.1 622.7C466.3 608.4 468 616 466.3 605.1C464.7 594.2 465.1 599.7 465.1 590C465.1 580.3 464.2 592.2 466.3 575.9C468.4 559.6 466.8 564 471.5 541C476.2 518 473.7 528.9 480.5 507C487.3 485.1 482 496.1 491.8 475.4C501.6 454.7 496.9 464.3 510 445C523.1 425.7 518.3 432.6 531 417.6C543.7 402.6 536.6 411.1 548 400C559.4 388.9 551 395.9 565.1 384.4C579.2 372.9 571.8 376.9 590.2 365.6C608.7 354.3 596.1 358.9 620.4 350.5C644.7 342.1 648.9 343.8 663.1 340.5L665.6 336.7C666.4 332.9 664.8 333.3 668.1 325.4C671.5 317.4 669 320.8 675.7 312.8C682.4 304.9 678.2 307.8 688.2 301.5C698.3 295.2 694.9 297.7 705.8 294C716.7 290.2 712.1 291.5 720.9 290.2C729.7 288.9 728.4 290.2 732.2 290.2L732.2 290.2L746 273.9L766.1 250L770.1 246.5L770.1 246.5C772.6 245.8 770.1 244.5 777.7 244.5C785.2 244.5 787.7 245.8 792.7 246.5L792.7 246.5L820.4 217.6L820.4 217.6C823.7 215.8 823.3 214.4 830.4 212.1C837.5 209.7 834.2 210.4 841.7 210.6C849.3 210.7 849.3 211.9 853 212.6L853 212.6L910.8 239L910.8 239C914.2 241.9 916.5 240.6 920.9 247.8C925.2 254.9 922.9 256.1 923.9 260.3L923.9 260.3L923.9 291.7L968.6 331.9L968.6 331.9L970.6 340.7L970.6 340.7L969.4 386" fill="none" stroke="#1f72ff" stroke-width="3" stroke-linejoin="round"/>
<path d="M969.4 386 L968.2 370 L969 386 L951.5 410.8 L952.2 418.1 L949.3 469.1 L942 489.9 L943.5 488 L924.6 505.6" fill="none" stroke="#1f72ff" stroke-width="2.2" stroke-linejoin="round" stroke-linecap="round"/>
<path d="M523.7 614.7C523.8 611.4 523.6 616.3 524.1 605C524.7 593.6 524.1 596.9 525.4 580.7C526.6 564.5 525.4 573.4 527.8 556.4C530.2 539.5 528.6 547.5 532.6 529.8C536.7 512 534.2 520.1 539.9 503.1C545.6 486.1 541.5 494.2 549.6 478.8C557.7 463.5 553.7 469.9 564.2 457C574.7 444 571.6 451 581.1 440C590.6 429 581.3 434.8 592.7 424C604 413.2 598.5 417.3 615.3 407.7C632 398.1 623.7 401.8 642.9 395.1C662.2 388.4 651.3 391.4 673.1 387.6C694.8 383.8 696.5 385.1 708.2 383.8" fill="none" stroke="#8f6db2" stroke-width="1.76" stroke-linecap="round" stroke-linejoin="round"/>
<path d="M708.2 383.8 L720.8 375 L725.8 370" fill="none" stroke="#8f6db2" stroke-width="1.76" stroke-linecap="round" stroke-linejoin="round"/>
<path d="M552 515.2C554.5 509.5 553.7 510.4 559.3 498.2C565 486.1 560.9 492.6 569 478.8C577.1 465.1 573.1 469.9 583.6 457C594.1 444 593.3 448.1 600.6 440C607.8 431.9 596.1 440.2 605.2 432.8C614.3 425.4 611.1 426.5 627.8 417.7C644.6 408.9 636.2 412.3 655.5 406.4C674.7 400.6 665.1 402.9 685.6 400.2C706.1 397.4 706.6 398.8 717 398.1" fill="none" stroke="#8f6db2" stroke-width="1.76" stroke-linecap="round" stroke-linejoin="round"/>
<path d="M717 398.1 L722.1 391.4 L720.8 388.8" fill="none" stroke="#8f6db2" stroke-width="1.76" stroke-linecap="round" stroke-linejoin="round"/>
<path d="M622.3 437.8 L580.1 483.1 L580.6 500.7 L570.1 505.7" fill="none" stroke="#8f6db2" stroke-width="1.62" stroke-linecap="round" stroke-linejoin="round"/>
<path d="M570.1 505.7C568 510.7 567.1 509.9 563.8 520.8C560.4 531.6 562.7 526.4 560 538.3C557.3 550.2 558.3 543.1 555.7 556.4C553 569.8 553.2 571 552 578.3" fill="none" stroke="#8f6db2" stroke-width="1.62" stroke-linecap="round" stroke-linejoin="round"/>
<path d="M622.3 437.8C635 450.4 637.7 454.6 660.5 475.5C683.3 496.5 670.6 485.6 690.7 500.7C710.8 515.7 700.7 508.6 720.8 520.8C740.9 532.9 730.9 527.5 751 537.1C771.1 546.7 761.4 542.9 781.1 549.6C800.8 556.3 797.1 554 810 557.2C822.9 560.4 816.5 558.5 819.7 559.1" fill="none" stroke="#8f6db2" stroke-width="2.16" stroke-linecap="round" stroke-linejoin="round"/>
<path d="M542.3 579.5 L541.8 605" fill="none" stroke="#8f6db2" stroke-width="1.62" stroke-linecap="round" stroke-linejoin="round"/>
<path d="M542.3 579.5C552 588 552 590 571.4 605C590.8 619.9 576 611.6 600.6 624.4C625.1 637.2 621.9 632.8 645.1 643.3C668.4 653.8 653.5 648.3 670.3 655.9C687 663.4 687 662.6 695.4 665.9" fill="none" stroke="#8f6db2" stroke-width="1.76" stroke-linecap="round" stroke-linejoin="round"/>
<path d="M531.7 608.8C539.6 617.6 535.8 618.9 555.5 635.2C575.2 651.6 567.3 644.9 590.7 657.8C614.2 670.8 607.7 666.4 625.9 674.2C644 681.9 630.3 677.5 645.1 681C659.9 684.5 653.5 685.6 670.3 684.8C687 683.9 674.4 686.4 695.4 678.5C716.3 670.5 707.9 675.1 733.1 660.9C758.2 646.7 748.1 652.5 770.8 635.8C793.4 619 784.2 626.6 800.9 610.7C817.7 594.7 809.3 603.1 821 588C832.7 573 826.9 582.2 836.1 565.4C845.3 548.7 841.9 556.2 848.6 537.8C855.3 519.4 852 529.4 856.2 510.2C860.4 490.9 859.5 490.1 861.2 480" fill="none" stroke="#8f6db2" stroke-width="1.76" stroke-linecap="round" stroke-linejoin="round"/>
<path d="M833.6 555.4C826 565.4 824.4 570.5 811 585.5C797.6 600.6 804.3 593.5 793.4 600.6C782.5 607.7 783.3 604.8 778.3 606.9" fill="none" stroke="#8f6db2" stroke-width="1.89" stroke-linecap="round" stroke-linejoin="round"/>
<path d="M756.9 600.6 L768.2 611.9" fill="none" stroke="#8f6db2" stroke-width="1.76" stroke-linecap="round" stroke-linejoin="round"/>
<path d="M764.5 628.2 L780.8 616.9" fill="none" stroke="#8f6db2" stroke-width="2.03" stroke-linecap="round" stroke-linejoin="round"/>
<path d="M633.8 512.7C635.9 514.8 635.1 516.9 640.1 518.9C645.1 521 644.9 517.3 648.9 518.9C652.9 520.6 651.1 522.3 652.2 524" fill="none" stroke="#8f6db2" stroke-width="2.03" stroke-linecap="round" stroke-linejoin="round"/>
<path d="M661.5 515.2C663.1 515 663.6 515.9 666.5 514.7C669.4 513.4 669 512.5 670.3 511.4" fill="none" stroke="#8f6db2" stroke-width="2.03" stroke-linecap="round" stroke-linejoin="round"/>
<path d="M636.3 562.9C637.6 558.7 634.7 556.6 640.1 550.4C645.5 544.1 643 543.2 652.7 544.1C662.3 544.9 663.6 549.9 669 552.9" fill="none" stroke="#8f6db2" stroke-width="2.03" stroke-linecap="round" stroke-linejoin="round"/>
<path d="M666.5 576.7C668.6 573.8 667.3 570.9 672.8 567.9C678.2 565 678 565.4 682.8 567.9C687.7 570.5 685.8 573 687.3 575.5" fill="none" stroke="#8f6db2" stroke-width="2.03" stroke-linecap="round" stroke-linejoin="round"/>
<path d="M714.2 566.7C714.6 565 710.9 564.2 715.5 561.7C720.1 559.1 722.6 557.5 728 559.1C733.5 560.8 727.6 563.3 731.8 566.7C736 570 735.2 569.6 740.6 569.2C746 568.8 745.5 567.5 748.1 565.4C750.8 563.3 748.5 563.8 748.6 562.9" fill="none" stroke="#8f6db2" stroke-width="2.03" stroke-linecap="round" stroke-linejoin="round"/>
<path d="M682.8 600.6C687.8 598.5 689.5 599.3 697.9 594.3C706.3 589.3 702.7 592.6 707.9 585.5C713.1 578.4 711.6 577.2 713.5 573" fill="none" stroke="#8f6db2" stroke-width="2.03" stroke-linecap="round" stroke-linejoin="round"/>
<path d="M664 625.7C666.9 627.8 666.5 631.2 672.8 632C679 632.8 676.1 630.8 682.8 628.2C689.5 625.7 686.6 626.6 692.9 624.5C699.1 622.4 698.7 622.8 701.7 622" fill="none" stroke="#8f6db2" stroke-width="2.03" stroke-linecap="round" stroke-linejoin="round"/>
<path d="M655.2 615.7C657.3 611.9 657.7 609.4 661.5 604.4C665.2 599.3 663.6 600.2 666.5 600.6C669.4 601 669 604 670.3 605.6" fill="none" stroke="#8f6db2" stroke-width="2.03" stroke-linecap="round" stroke-linejoin="round"/>
<path d="M590.8 585.6C593.3 587.2 592.1 590 598.1 590.4C604.2 590.8 605 590.8 609 586.8C613.1 582.7 605 581.9 610.3 578.3C615.5 574.6 620 576.7 624.8 575.8" fill="none" stroke="#8f6db2" stroke-width="2.03" stroke-linecap="round" stroke-linejoin="round"/>
<path d="M761.8 338.2 L793.6 293.6" fill="none" stroke="#8f6db2" stroke-width="1.76" stroke-linecap="round" stroke-linejoin="round"/>
<path d="M793.6 293.6C800 294.5 797.3 292.4 812.7 296.4C828.2 300.3 821.8 297.9 840 305.5C858.2 313 850.3 309.4 867.3 319.1C884.2 328.8 876.4 324.2 890.9 334.5C905.5 344.8 904.2 344.8 910.9 350" fill="none" stroke="#8f6db2" stroke-width="1.89" stroke-linecap="round" stroke-linejoin="round"/>
<path d="M717.8 348.2C719.5 346.1 717 344.9 722.8 342C728.7 339 729.6 340.1 735.4 339.4C741.1 338.8 732.4 338.3 740 340C747.6 341.7 743 339.4 758.2 344.5C773.3 349.7 767.3 347.6 785.5 355.5C803.6 363.3 794.5 359.1 812.7 368.2C830.9 377.3 821.8 372.4 840 382.7C858.2 393 852.1 389.4 867.3 399.1C882.4 408.8 875.2 403.9 885.5 411.8C895.8 419.7 893 417.3 898.2 422.7C903.3 428.2 900 426.4 900.9 428.2" fill="none" stroke="#8f6db2" stroke-width="1.89" stroke-linecap="round" stroke-linejoin="round"/>
<path d="M747.3 372.7C753.9 374.8 751.5 372.7 767.3 379.1C783 385.5 776.4 382.7 794.5 391.8C812.7 400.9 807.3 398.5 821.8 406.4C836.4 414.2 830 410.3 838.2 415.5C846.4 420.6 843.6 419.7 846.4 421.8" fill="none" stroke="#8f6db2" stroke-width="1.89" stroke-linecap="round" stroke-linejoin="round"/>
<path d="M722.1 391.4C726.7 395.1 723.8 395.2 735.9 402.7C747.9 410.1 744.7 406.9 758.2 413.6C771.7 420.3 764.2 416.7 776.4 422.7C788.5 428.8 783.6 426.1 794.5 431.8C805.5 437.6 796.7 434.3 809.1 440C821.5 445.7 824.2 446 831.7 449" fill="none" stroke="#8f6db2" stroke-width="1.89" stroke-linecap="round" stroke-linejoin="round"/>
<path d="M840 440C843 437.3 843.6 435.5 849.1 431.8C854.5 428.2 853 429.4 856.4 429.1C859.7 428.8 858.2 430.3 859.1 430.9" fill="none" stroke="#8f6db2" stroke-width="1.89" stroke-linecap="round" stroke-linejoin="round"/>
<path d="M834.2 457.8C838 462 840.1 461.2 845.5 470.4C850.9 479.6 848 475.4 850.5 485.5C853 495.5 852.2 495.5 853 500.5" fill="none" stroke="#8f6db2" stroke-width="1.49" stroke-linecap="round" stroke-linejoin="round"/>
<path d="M853 455.3C856.4 462 858.1 462.8 863.1 475.4C868.1 488 866 482.9 868.1 493C870.2 503 869 501.4 869.4 505.6" fill="none" stroke="#8f6db2" stroke-width="1.49" stroke-linecap="round" stroke-linejoin="round"/>
<path d="M846.8 456.6 L868.1 436.5" fill="none" stroke="#8f6db2" stroke-width="1.76" stroke-linecap="round" stroke-linejoin="round"/>
<path d="M831.7 449 L859.3 427.7" fill="none" stroke="#8f6db2" stroke-width="1.76" stroke-linecap="round" stroke-linejoin="round"/>
<path d="M741.2 374.8 L750.3 459.3" stroke="#1a6fe8" stroke-width="1.7"/>
<path d="M763.5 479.7 L901 552.5" stroke="#d61a24" stroke-width="1.6"/>
<path d="M742.5 485.5 L648 603" stroke="#1f9a44" stroke-width="1.6"/>
<path d="M736.4 340.8 L752.9 349.6 L753.8 362.2 L741.2 374.8 L726.7 367 L724.7 353.4Z" fill="#1a6fe8"/>
<path d="M750 459.3 L763.5 468 L764.5 479.7 L754.8 490.3 L739.3 482.6 L737.9 470.9Z" fill="#ffffff"/>
<path d="M909.1 540.9 L924.5 549.1 L924.5 560 L915.5 573.6 L899.1 565.5 L900 552.7Z" fill="#d81e28"/>
<path d="M637.2 597.5 L653.5 606.3 L654.8 615.1 L643.5 630.2 L627.1 621.4 L625.9 610.1Z" fill="#22a048"/>
</svg>
<div class="leftbar"></div>
<div class="stlbox"></div>
<svg class="scene" width="100" height="100" viewBox="0 0 100 100">
<path d="M12.6 0 H52 V22 Q52 30.5 60 30.5 H82 V88 Q82 93 77 93 H12 Q7 93 7 88 V9 Q7 2.5 12.6 0Z" fill="#3f48cc"/>
<path d="M56 1.5 L80.5 26.5 H60 Q56 26.5 56 22.5Z" fill="#3f48cc"/>
<rect x="-6" y="11.7" width="45" height="28.3" rx="5" fill="#3f48cc" stroke="#fff" stroke-width="4.2"/>
<rect x="20" y="47" width="49" height="4.7" fill="#fff"/>
<rect x="20" y="61.8" width="49" height="4.4" fill="#fff"/>
<rect x="20" y="75.7" width="49" height="4.7" fill="#fff"/>
<text x="1.2" y="30.8" font-family="Liberation Sans, sans-serif" font-weight="bold" font-size="12.6" fill="#fff" textLength="24.5" lengthAdjust="spacingAndGlyphs">STL</text>
</svg>
<div class="panel"></div>
<svg class="scene" width="20" height="300" viewBox="0 0 20 300"><path d="M17.5 260.3 L3.9 273.5 L17.5 286.7" fill="#fff" stroke="#c8c8c8" stroke-width="1"/></svg>
<div class="field hot" style="left:50px;top:257px;width:179px"></div>
<div class="field hot" style="left:237px;top:257px;width:179px"></div>
<div class="field" style="left:50px;top:298px;width:179px;height:32px"></div>
<div class="field" style="left:237px;top:298px;width:179px;height:32px"></div>
<div class="field" style="left:50px;top:339px;width:179px;height:32px"></div>
<div class="field" style="left:237px;top:339px;width:179px;height:32px"></div>
<span class="abs" id="lx" style="left:32.8px;top:265.6px;color:#f01a3c">X</span>
<span class="abs" id="ly" style="left:32.6px;top:306.6px;color:#52ac3c">Y</span>
<span class="abs" id="lz" style="left:33px;top:347.6px;color:#2a6ef0">Z</span>
<span class="abs" id="v1" style="letter-spacing:-0.16px;left:55.3px;top:265.6px">78.5209</span>
<span class="abs" id="v2" style="letter-spacing:-0.16px;left:55.3px;top:306.6px">121.2305</span>
<span class="abs" id="v3" style="letter-spacing:-0.4px;left:55.3px;top:347.6px">16</span>
<span class="abs unit" id="u1" style="letter-spacing:-0.2px;left:196.8px;top:265.6px">mm</span>
<span class="abs unit" id="u2" style="letter-spacing:-0.2px;left:196.8px;top:306.6px">mm</span>
<span class="abs unit" id="u3" style="letter-spacing:-0.2px;left:196.8px;top:347.6px">mm</span>
<span class="abs" id="p1" style="letter-spacing:-0.29px;left:243.2px;top:265.6px">100</span>
<span class="abs" id="p2" style="letter-spacing:-0.29px;left:243.2px;top:306.6px">100</span>
<span class="abs" id="p3" style="letter-spacing:-0.29px;left:243.2px;top:347.6px">100</span>
<span class="abs unit" id="q1" style="font-size:12.6px;letter-spacing:0;left:397.5px;top:265.6px">%</span>
<span class="abs unit" id="q2" style="font-size:12.6px;letter-spacing:0;left:397.5px;top:306.6px">%</span>
<span class="abs unit" id="q3" style="font-size:12.6px;letter-spacing:0;left:397.5px;top:347.6px">%</span>
<div class="cb" style="top:392.2px"></div>
<div class="cb" style="top:428.6px"></div>
<svg class="scene" width="440" height="480" viewBox="0 0 440 480">
<path d="M137 440 L139.7 442.9 L144.3 437.3" fill="none" stroke="#14142e" stroke-width="2.5" stroke-linejoin="miter"/>
<path d="M72.6 414.2 L81.3 413.9 A9.9 9.9 0 1 1 71.6 424.6" fill="none" stroke="#0d0b3f" stroke-width="2.4" stroke-linecap="round"/>
<path d="M77.9 409 L72.4 414.3 L77.9 419.5" fill="none" stroke="#0d0b3f" stroke-width="2.4" stroke-linecap="round" stroke-linejoin="round"/>
</svg>
<span class="abs" id="t1" style="letter-spacing:-0.22px;left:159.3px;top:394.6px">Snap Scaling</span>
<span class="abs" id="t2" style="letter-spacing:0.19px;left:159.3px;top:431.2px">Uniform Scaling</span>
<span class="abs gray" id="o1" style="letter-spacing:0.09px;left:49.7px;top:679.2px">Object list</span>
<span class="abs gray" id="o2" style="letter-spacing:-0.48px;left:57.8px;top:716.5px">STL1189</span>
<span class="abs gray" id="o3" style="letter-spacing:-0.06px;left:16.3px;top:748.8px">78.5 x 121.2 x 16.0 mm</span>
<svg class="scene" width="995" height="825" viewBox="0 0 995 825">
<g fill="none" stroke="#6b6b6b" stroke-linejoin="round" stroke-linecap="round">
<path d="M18.9 688.6 L24.2 683.2 L29.5 688.6" stroke-width="1.4" stroke="#777"/>
<path d="M19.3 731.7 H36.4" stroke-width="1.5" stroke="#666"/>
<g stroke-width="2.3">
<path d="M32.7 787.4 L44 793.9 V805.9 L32.7 812.4 L21.4 805.9 V793.9Z M21.4 793.9 L32.7 800 L44 793.9 M32.7 800 V812.4"/>
<path d="M61.6 793.9 L67.4 788 H84.4 V805.1 L78.2 811.2 M84.4 788 L78 793.9"/>
<path d="M101.8 793.9 H117.6 V811.2 H101.8Z M124.2 788 V805.1 L117.6 811.2"/>
<path d="M147.5 793.9 H164.2 V811.2 H147.5Z M141.3 788 H158.2 L164.2 793.9"/>
<path d="M181.5 793.9 H198 V811.2 H181.5Z M181.5 793.9 L187.3 788 H204.6"/>
</g>
</g>
<g fill="#6b6b6b" stroke="#6b6b6b" stroke-width="2.3" stroke-linejoin="round">
<path d="M61.6 793.9 H78 V811.2 H61.6Z"/>
<path d="M101.8 793.9 L107.6 788 H124.2 L117.6 793.9Z"/>
<path d="M141.3 788 L147.5 793.9 V811.2 L141.3 805.1Z"/>
<path d="M204.6 788 V805.1 L198 811.2 V793.9Z"/>
</g>
<path d="M22.3 727.5 L20.8 729 L20.8 728.9 L21 726.2 L31.6 715.6 L34.4 718.4 L23.8 729 L20.8 729Z" fill="#666"/>
</svg>
</body></html>
